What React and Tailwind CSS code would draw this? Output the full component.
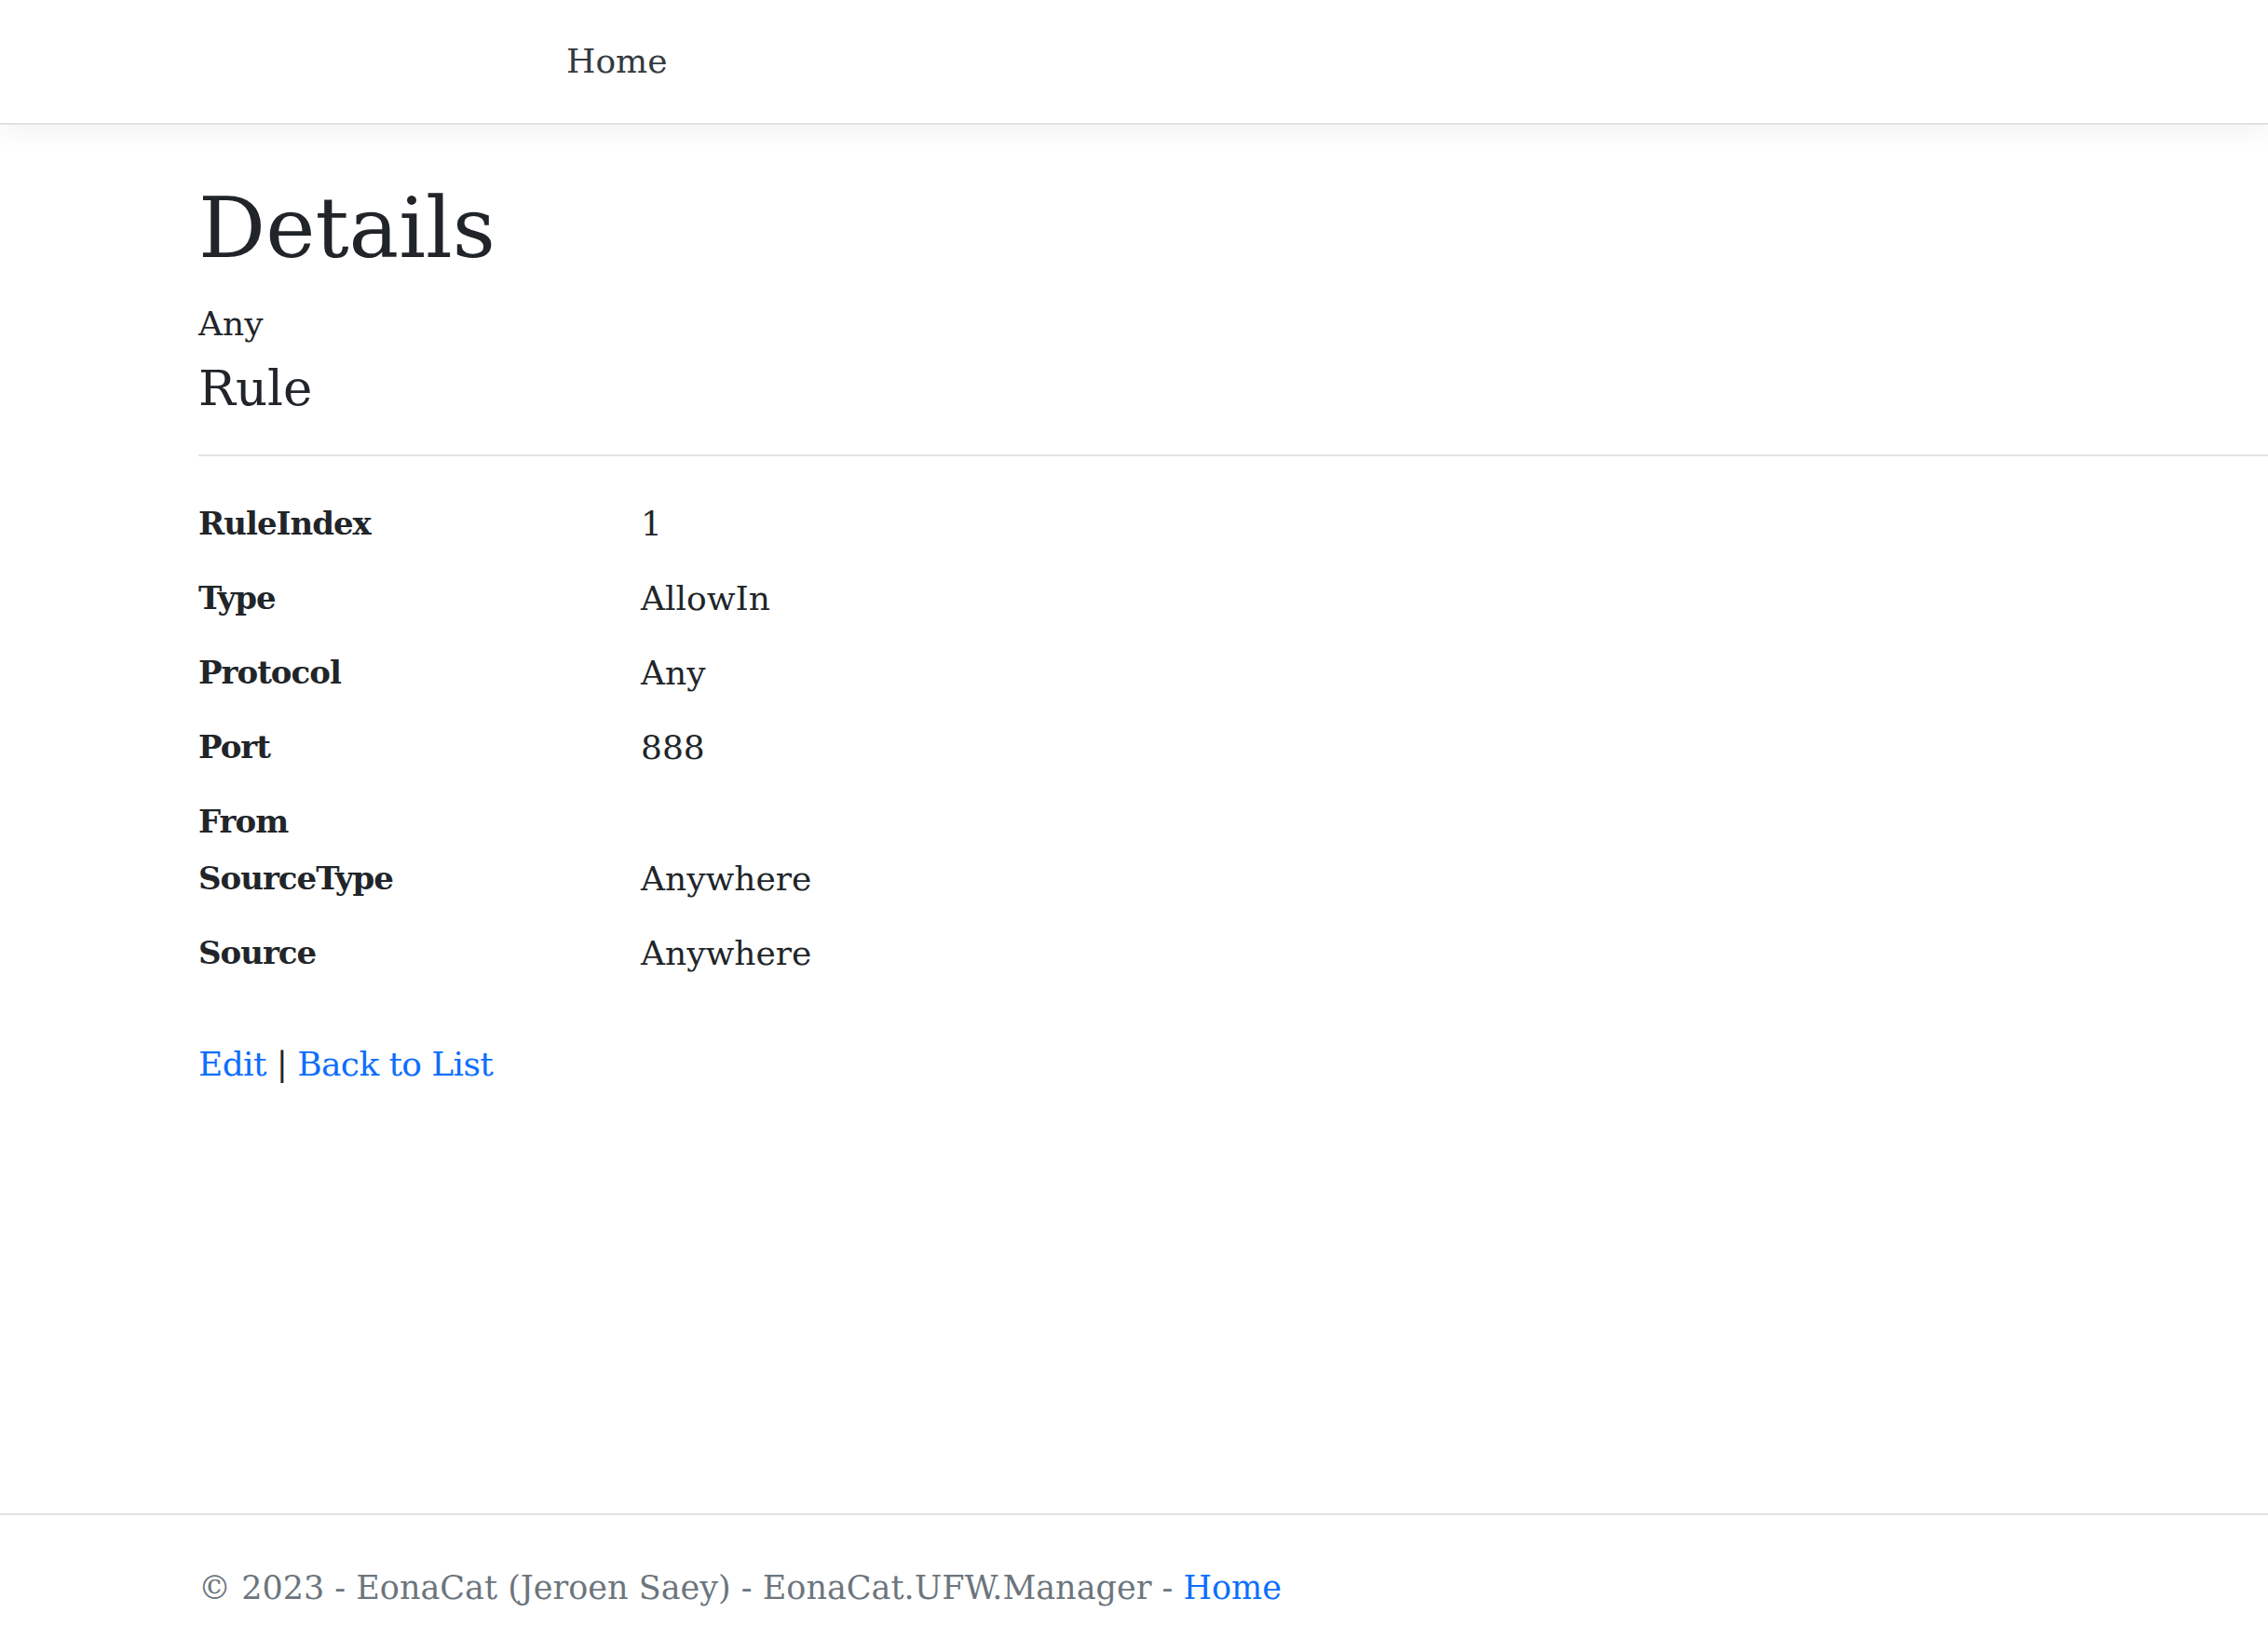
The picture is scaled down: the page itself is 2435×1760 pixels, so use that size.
import React from "react";

const rows = [
  { k: "RuleIndex", v: "1" },
  { k: "Type", v: "AllowIn" },
  { k: "Protocol", v: "Any" },
  { k: "Port", v: "888" },
  { k: "From", v: null },
  { k: "SourceType", v: "Anywhere" },
  { k: "Source", v: "Anywhere" },
];

export default function App() {
  return (
    <div
      className="min-h-screen flex flex-col bg-white text-[#212529] overflow-hidden"
      style={{ fontFamily: '"DejaVu Serif", "Liberation Serif", serif' }}
    >
      <header className="relative z-10 h-[134px] bg-white border-b-2 border-[#dee2e6] shadow-[0_9px_26px_rgba(0,0,0,0.05)] flex items-center">
        <nav className="pl-[608px]">
          <a className="text-[36px] leading-[54px] text-[#343a40]">Home</a>
        </nav>
      </header>

      <main className="flex-1 pl-[213px]">
        <h1 className="mt-[57px] text-[90px] leading-[108px] font-normal">Details</h1>
        <div className="mt-[22px] text-[36px] leading-[54px]">Any</div>
        <h4 className="mt-[10px] text-[53px] leading-[64px] font-normal">Rule</h4>
        <div className="mt-[39px] h-[2px] bg-[#e2e3e5]" />
        <dl className="mt-[42px] flex flex-col text-[36px] leading-[61px]">
          {rows.map((r) => (
            <div key={r.k} className={r.v === null ? "flex" : "flex mb-[19px]"}>
              <dt className="w-[475px] font-bold text-[34px] tracking-[-1px]">{r.k}</dt>
              {r.v !== null && <dd>{r.v}</dd>}
            </div>
          ))}
        </dl>
        <div className="mt-[43px] text-[36px] leading-[54px] tracking-[-0.6px]">
          <a className="text-[#0d6efd]">Edit</a> | <a className="text-[#0d6efd]">Back to List</a>
        </div>
      </main>

      <footer className="h-[135px] border-t-2 border-[#dee2e6] pl-[213px] pt-[51px] text-[35px] leading-[54px] text-[#6c757d] whitespace-nowrap">
        © 2023 - EonaCat (Jeroen Saey) - EonaCat.UFW.Manager - <a className="text-[#0d6efd]">Home</a>
      </footer>
    </div>
  );
}
